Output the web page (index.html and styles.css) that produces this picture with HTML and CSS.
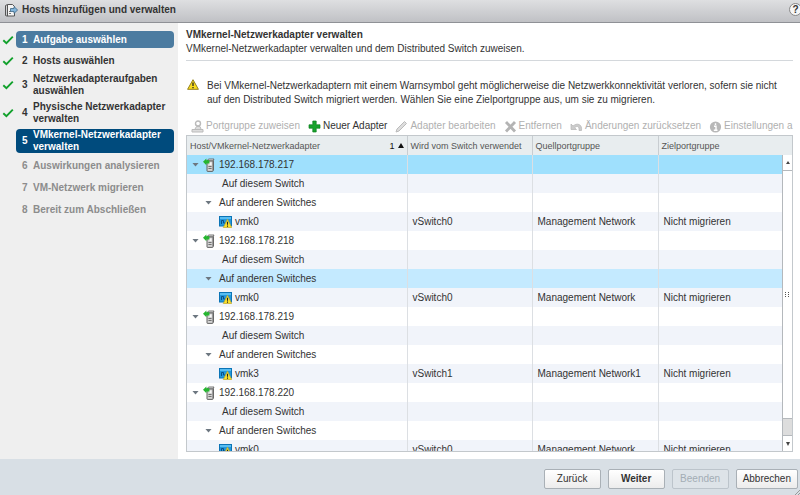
FILE: index.html
```html
<!DOCTYPE html>
<html lang="de">
  <head>
    <meta charset="UTF-8" />
    <meta name="viewport" content="width=device-width, initial-scale=1.0" />
    <title>Hosts hinzufügen und verwalten</title>
    <link rel="stylesheet" href="styles.css" />
  </head>
  <body>
    <svg class="sprite" aria-hidden="true">
      <symbol id="check" viewBox="0 0 12 10">
        <path d="M1.3 5.2L4.4 8.2L10.8 1.6" fill="none" stroke="#12a12c" stroke-width="1.9" />
      </symbol>
      <symbol id="warning" viewBox="0 0 12 11">
        <path d="M6 .7L11.4 10.3H.6Z" fill="#f9dc1c" stroke="#94801c" stroke-linejoin="round" />
        <path d="M6 3.6V7M6 8V9.2" stroke="#222" stroke-width="1.3" />
      </symbol>
      <symbol id="host" viewBox="0 0 12 14">
        <path d="M4 3L5.5 1H11L10 3Z" fill="#e8e8e8" stroke="#555" stroke-width=".8" />
        <path d="M10 3L11 1V11.5L10 13.3Z" fill="#777" />
        <rect x="4" y="3" width="6" height="10.4" rx=".6" fill="#d4d4d4" stroke="#555" stroke-width=".9" />
        <path d="M5.4 8.5H8.6M5.4 10.5H8.6" stroke="#666" stroke-width=".9" />
        <path d="M7.5 4.5V7" stroke="#f8f8f8" stroke-width="2" />
        <path d="M0 3.8L3.4 .4V2.2H6.4V5.4H3.4V7.2Z" fill="#25b62f" />
      </symbol>
      <symbol id="vmk" viewBox="0 0 13 12">
        <rect x=".5" y=".5" width="12" height="9.5" fill="#2297dc" stroke="#0b74b6" />
        <path d="M1 1H12V3H1Z" fill="#57bdf2" />
        <path d="M2.5 8V4.5H4.5V7H6" fill="none" stroke="#0b4f86" />
        <path d="M8.5 3.2L12.7 11.5H4.3Z" fill="#fbe22c" stroke="#c0a52a" stroke-width=".7" />
        <path d="M8.5 5.8V8.8M8.5 9.6V10.7" stroke="#222" stroke-width="1.1" />
      </symbol>
    </svg>

    <header class="titlebar">
      <svg class="title-icon" viewBox="0 0 14 14">
        <path d="M3.5 1.5L1.5 2.5V12.5L3.5 13.3" fill="none" stroke="#555" />
        <path d="M3.5 1.5H8.5L10.5 3.5V13H3.5Z" fill="#f4f4f4" stroke="#555" />
        <path d="M5 10.5H7M5 8.5H7" stroke="#777" />
        <path d="M6.5 5.5H10V3.6L13.6 7L10 10.4V8.5H6.5Z" fill="#84b6dc" stroke="#3d6787" stroke-width=".8" />
      </svg>
      <h1>Hosts hinzufügen und verwalten</h1>
      <button class="help" aria-label="Hilfe">?</button>
    </header>

    <main class="wizard">
      <ol class="steps">
        <li class="done"><svg class="check"><use href="#check" /></svg><div class="step visited"><b>1</b><span>Aufgabe auswählen</span></div></li>
        <li class="done"><svg class="check"><use href="#check" /></svg><div class="step"><b>2</b><span>Hosts auswählen</span></div></li>
        <li class="done"><svg class="check"><use href="#check" /></svg><div class="step"><b>3</b><span>Netzwerkadapteraufgaben auswählen</span></div></li>
        <li class="done"><svg class="check"><use href="#check" /></svg><div class="step"><b>4</b><span>Physische Netzwerkadapter verwalten</span></div></li>
        <li><div class="step current"><b>5</b><span>VMkernel-Netzwerkadapter verwalten</span></div></li>
        <li><div class="step pending"><b>6</b><span>Auswirkungen analysieren</span></div></li>
        <li><div class="step pending"><b>7</b><span>VM-Netzwerk migrieren</span></div></li>
        <li><div class="step pending"><b>8</b><span>Bereit zum Abschließen</span></div></li>
      </ol>

      <section class="content">
        <div class="intro">
          <h2>VMkernel-Netzwerkadapter verwalten</h2>
          <p>VMkernel-Netzwerkadapter verwalten und dem Distributed Switch zuweisen.</p>
        </div>

        <div class="notice">
          <svg class="warn"><use href="#warning" /></svg>
          <p>Bei VMkernel-Netzwerkadaptern mit einem Warnsymbol geht möglicherweise die Netzwerkkonnektivität verloren, sofern sie nicht auf den Distributed Switch migriert werden. Wählen Sie eine Zielportgruppe aus, um sie zu migrieren.</p>
        </div>

        <div class="toolbar">
          <button disabled>
            <svg viewBox="0 0 13 13"><circle cx="7" cy="3.5" r="2.5" fill="none" stroke="#bbb" stroke-width="1.4" /><path d="M4 9L5.5 6.5H9L10 9M1 9.5H12V12H1Z" fill="#ddd" stroke="#bbb" /></svg>
            Portgruppe zuweisen
          </button>
          <button>
            <svg viewBox="0 0 13 13"><path d="M4.8 1H8.2V4.8H12V8.2H8.2V12H4.8V8.2H1V4.8H4.8Z" fill="#18a32c" stroke="#0d7f1e" stroke-width=".7" /></svg>
            Neuer Adapter
          </button>
          <button disabled>
            <svg viewBox="0 0 13 13"><path d="M1 12L2 9L9.5 1.5L11.5 3.5L4 11Z" fill="#ddd" stroke="#bbb" /></svg>
            Adapter bearbeiten
          </button>
          <button disabled>
            <svg viewBox="0 0 13 13"><path d="M2 2L11 11.5M11 2L2 11.5" stroke="#b4b4b4" stroke-width="2.8" /></svg>
            Entfernen
          </button>
          <button disabled>
            <svg viewBox="0 0 13 13"><path d="M1 4V9.5H6.5L4.7 7.8C7 5.5 9.5 6 9 10.5H11.5C12.5 4 7 2.5 3 6Z" fill="#ccc" stroke="#b4b4b4" stroke-width=".7" /></svg>
            Änderungen zurücksetzen
          </button>
          <button disabled>
            <svg viewBox="0 0 13 13"><circle cx="6.5" cy="7" r="5.6" fill="#b8b8b8" /><path d="M6.5 3.3V5M5 6.3H7V10M4.8 10.3H8.5" fill="none" stroke="#fff" stroke-width="1.4" /></svg>
            Einstellungen a
          </button>
        </div>

        <div class="grid">
          <table>
            <colgroup><col class="col-host" /><col class="col-switch" /><col class="col-source" /><col /></colgroup>
            <thead>
              <tr>
                <th><div class="sorted">Host/VMkernel-Netzwerkadapter <span class="sort">1 <i></i></span></div></th>
                <th>Wird vom Switch verwendet</th>
                <th>Quellportgruppe</th>
                <th>Zielportgruppe</th>
              </tr>
            </thead>
            <tbody id="rows"></tbody>
          </table>
          <div class="scrollbar" aria-hidden="true">
            <span class="arrow up"></span>
            <span class="thumb"></span>
            <span class="track"></span>
            <span class="arrow down"></span>
          </div>
        </div>
      </section>
    </main>

    <footer class="actions">
      <button>Zurück</button>
      <button class="next">Weiter</button>
      <button disabled>Beenden</button>
      <button>Abbrechen</button>
      <svg class="grip" viewBox="0 0 6 6"><path d="M1 6L6 1M4 6L6 4" stroke="#999" /></svg>
    </footer>

    <script>
      const hosts = [
        { ip: "192.168.178.217", vmk: "vmk0", vswitch: "vSwitch0", network: "Management Network", hostClass: "selected" },
        { ip: "192.168.178.218", vmk: "vmk0", vswitch: "vSwitch0", network: "Management Network", groupClass: "hovered" },
        { ip: "192.168.178.219", vmk: "vmk3", vswitch: "vSwitch1", network: "Management Network1" },
        { ip: "192.168.178.220", vmk: "vmk0", vswitch: "vSwitch0", network: "Management Network" },
      ];
      const toggle = `<button class="toggle" aria-label="Zuklappen"></button>`;

      document.getElementById("rows").innerHTML = hosts
        .map(
          (host) => `
            <tr class="${host.hostClass || ""}">
              <td><div class="node level-1">${toggle}<svg class="host"><use href="#host" /></svg>${host.ip}</div></td>
              <td></td><td></td><td></td>
            </tr>
            <tr>
              <td><div class="node level-leaf">Auf diesem Switch</div></td>
              <td></td><td></td><td></td>
            </tr>
            <tr class="${host.groupClass || ""}">
              <td><div class="node level-2">${toggle}Auf anderen Switches</div></td>
              <td></td><td></td><td></td>
            </tr>
            <tr>
              <td><div class="node level-3"><svg class="vmk"><use href="#vmk" /></svg>${host.vmk}</div></td>
              <td>${host.vswitch}</td>
              <td>${host.network}</td>
              <td>Nicht migrieren</td>
            </tr>`
        )
        .join("");
    </script>
  </body>
</html>
```
FILE: styles.css
```css
* {
  box-sizing: border-box;
}
body {
  margin: 0;
  height: 100vh;
  display: flex;
  flex-direction: column;
  overflow: hidden;
  font-family: "Liberation Sans", Arial, sans-serif;
  font-size: 10px;
  line-height: 14px;
  color: #333;
  background-color: #fff;
}
h1,
h2,
p {
  margin: 0;
  font-size: 10px;
}
button {
  font: inherit;
  color: inherit;
  cursor: pointer;
}
button:disabled {
  cursor: default;
}
svg {
  flex: none;
}
.sprite {
  position: absolute;
  width: 0;
  height: 0;
}

.titlebar {
  flex: none;
  display: flex;
  align-items: center;
  height: 23px;
  padding: 0 0 3px 4px;
  gap: 4px;
  overflow: hidden;
  background: linear-gradient(#dedfe1, #c0c1c5);
  border-bottom: 1px solid #8f9196;
}
.title-icon {
  width: 14px;
  height: 14px;
}
.help {
  flex: none;
  width: 13px;
  height: 13px;
  margin-left: auto;
  margin-right: -2px;
  padding: 0;
  border: 1px solid #888;
  border-radius: 50%;
  background-color: #f6f6f6;
  font-weight: bold;
  line-height: 11px;
}

.wizard {
  flex: 1;
  display: flex;
  min-height: 0;
}
.steps {
  flex: none;
  display: flex;
  flex-direction: column;
  gap: 4px;
  width: 178px;
  margin: 0;
  padding: 8px 4px 0 2px;
  list-style: none;
  background-color: #efefef;
  font-weight: bold;
  line-height: 12px;
}
.steps li {
  display: flex;
  justify-content: flex-end;
  align-items: center;
  gap: 2px;
}
.check {
  width: 12px;
  height: 10px;
}
.step {
  display: flex;
  align-items: center;
  gap: 5px;
  width: 158px;
  min-height: 17px;
  padding-left: 6px;
  border-radius: 4px;
}
.step b {
  width: 6px;
}
.step span {
  flex: 1;
  padding-right: 8px;
}
.visited {
  background-color: #4b7ba0;
  color: #fff;
}
.current {
  background-color: #004b7d;
  color: #fff;
}
.pending {
  min-height: 18px;
  color: #8c8c8c;
}

.content {
  flex: 1;
  display: flex;
  flex-direction: column;
  min-width: 0;
  padding: 5px 7px 7px 8px;
}
.intro {
  padding-bottom: 4px;
  border-bottom: 1px solid #d4d8dc;
}
.notice {
  display: flex;
  gap: 8px;
  padding: 18px 8px 0 1px;
}
.warn {
  width: 12px;
  height: 11px;
}
.toolbar {
  display: flex;
  gap: 8px;
  padding: 12px 0 2px 5px;
}
.toolbar button {
  flex: none;
  display: flex;
  align-items: center;
  gap: 2px;
  padding: 0;
  border: none;
  background: none;
}
.toolbar button:disabled {
  color: #b0b0b0;
}
.toolbar svg {
  width: 13px;
  height: 13px;
}

.grid {
  flex: 1;
  position: relative;
  min-height: 0;
  overflow: hidden;
  border: 1px solid #c3c8cc;
}
table {
  width: 100%;
  table-layout: fixed;
  border-collapse: collapse;
}
.col-host {
  width: 220px;
}
.col-switch {
  width: 125px;
}
.col-source {
  width: 126px;
}
th,
td {
  height: 19px;
  padding: 0 5px;
  border-right: 1px solid #dcdfe3;
  text-align: left;
  white-space: nowrap;
}
th {
  padding: 0 3px;
  background-color: #e8edef;
  border-right-color: #c8cdd1;
  font-size: 9px;
  font-weight: normal;
  color: #555;
}
th:last-child,
td:last-child {
  border-right: none;
}
td:first-child {
  padding: 0;
}
tbody tr:nth-child(even) {
  background-color: #f1f4fa;
}
tbody tr.selected {
  background-color: #9fe0fd;
}
tbody tr.hovered {
  background-color: #c4eaff;
}
.sorted {
  display: flex;
  justify-content: space-between;
}
.sort {
  display: flex;
  align-items: center;
  gap: 3px;
  color: #111;
}
.sort i {
  border: 3px solid transparent;
  border-top: none;
  border-bottom: 5px solid #111;
}
.node {
  display: flex;
  align-items: center;
  gap: 4px;
}
.level-1 {
  padding-left: 5px;
}
.level-leaf {
  padding-left: 35px;
}
.level-2 {
  gap: 7px;
  padding-left: 18px;
}
.level-3 {
  gap: 3px;
  padding-left: 32px;
}
.toggle {
  width: 7px;
  height: 4px;
  padding: 0;
  border: none;
  background-color: #6d7780;
  clip-path: polygon(0 0, 100% 0, 50% 100%);
}
.host {
  width: 12px;
  height: 14px;
}
.vmk {
  width: 13px;
  height: 12px;
}

/* lies over the right edge of the rows, below the header */
.scrollbar {
  position: absolute;
  top: 19px;
  right: 0;
  bottom: 0;
  display: flex;
  flex-direction: column;
  width: 10px;
  border-left: 1px solid #b4b8bc;
  background-color: #fff;
}
.arrow {
  display: flex;
  align-items: center;
  justify-content: center;
  height: 15px;
}
.arrow::after {
  content: "";
  border: 2px solid transparent;
}
.up::after {
  border-top: none;
  border-bottom: 3px solid #444;
}
.down::after {
  border-bottom: none;
  border-top: 4px solid #444;
}
.thumb {
  flex: 1;
  display: flex;
  align-items: center;
  justify-content: center;
  border: 1px solid #b4b8bc;
  border-width: 1px 0;
}
.thumb::after {
  content: "";
  width: 5px;
  height: 5px;
  background: repeating-linear-gradient(#fff0 0 1px, #fff 1px 2px),
    repeating-linear-gradient(90deg, #555 0 1px, #fff 1px 3px);
}
.track {
  height: 17px;
  background-color: #ddd;
  border-bottom: 1px solid #b4b8bc;
}

.actions {
  flex: none;
  position: relative;
  display: flex;
  justify-content: flex-end;
  align-items: center;
  gap: 7px;
  height: 36px;
  padding: 3px 2px 0 0;
  background-color: #d8dfe5;
}
.actions button {
  min-width: 57px;
  height: 20px;
  padding: 0 6px;
  border: 1px solid #a9b0b6;
  border-radius: 2px;
  background: linear-gradient(#fff, #ececec);
}
.actions .next {
  font-weight: bold;
}
.actions button:disabled {
  border-color: #bcc4cb;
  background: #dde3e8;
  color: #a3adb5;
}
.grip {
  position: absolute;
  right: 0;
  bottom: 0;
  width: 6px;
  height: 6px;
}
```
